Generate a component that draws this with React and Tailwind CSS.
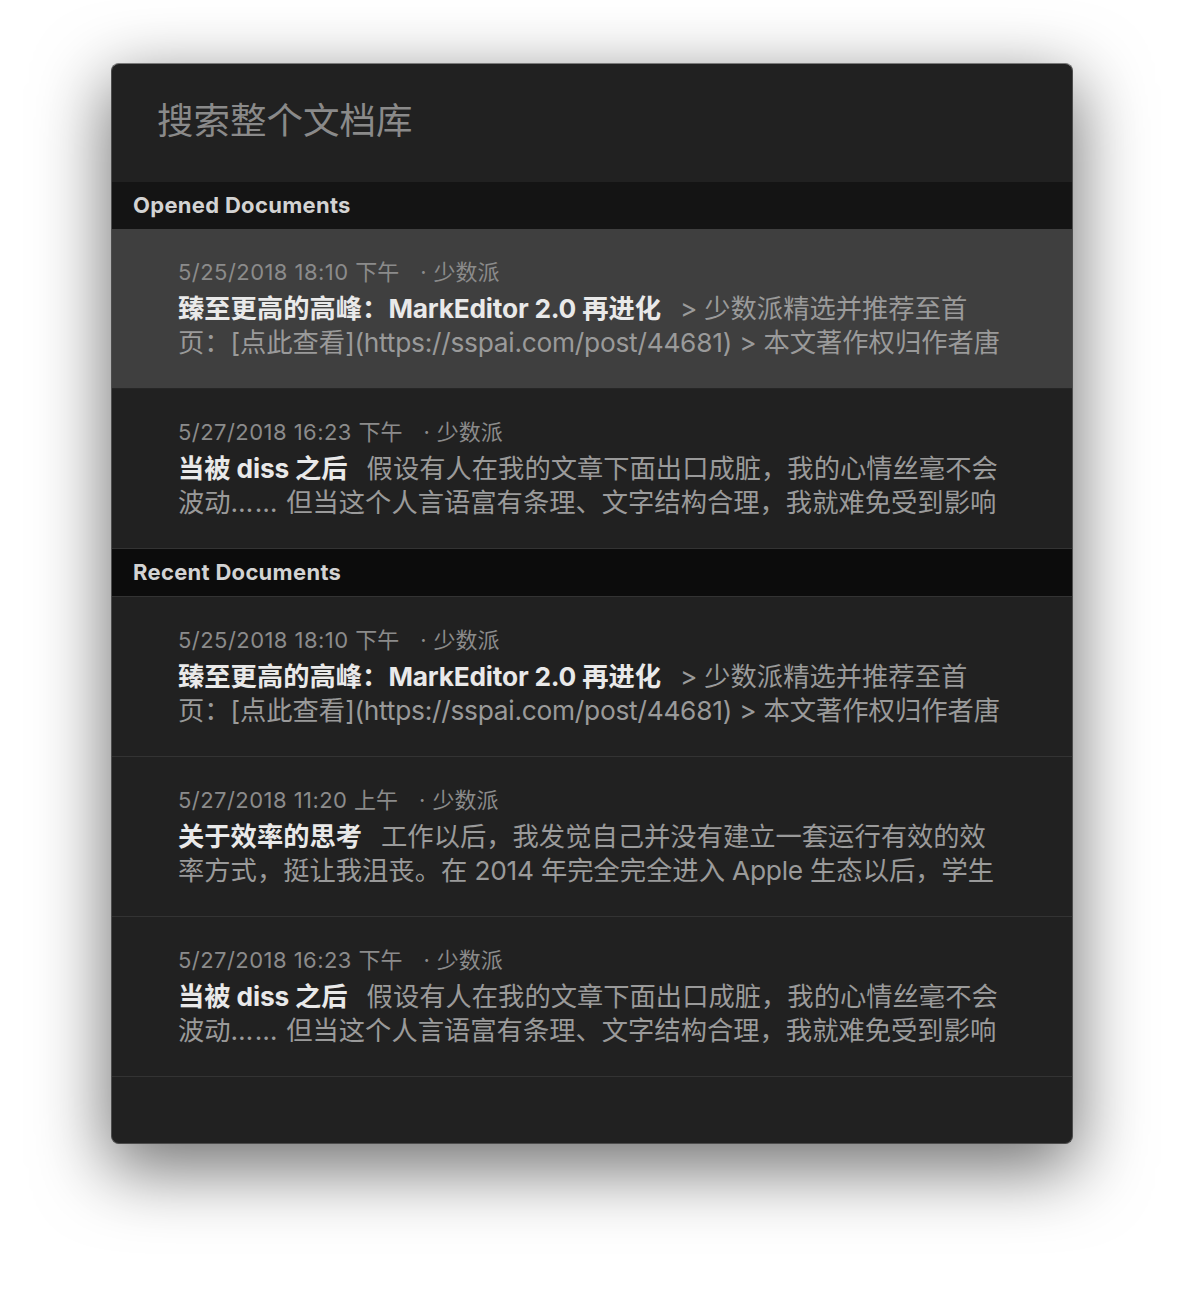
import React from "react";

const CJK = /([\u2E80-\u9FFF\uFF00-\uFFEF\u3000-\u303F]+)/;

function T({ text, latin }) {
  const parts = text.split(CJK);
  return (
    <>
      {parts.map((p, i) =>
        p === "" ? null : CJK.test(p) ? (
          <span key={i}>{p}</span>
        ) : (
          <span key={i} className={latin}>
            {p}
          </span>
        )
      )}
    </>
  );
}

const rows = {
  opened: [
    {
      date: "5/25/2018 18:10 下午",
      title: "臻至更高的高峰：MarkEditor 2.0 再进化",
      rest: "> 少数派精选并推荐至首",
      line2: ["页：[点此查看](https://sspai.com/post/44681) > 本文著作权归作者唐"],
      active: true,
    },
    {
      date: "5/27/2018 16:23 下午",
      title: "当被 diss 之后",
      rest: "假设有人在我的文章下面出口成脏，我的心情丝毫不会",
      line2: ["波动", "……", " 但当这个人言语富有条理、文字结构合理，我就难免受到影响"],
    },
  ],
  recent: [
    {
      date: "5/25/2018 18:10 下午",
      title: "臻至更高的高峰：MarkEditor 2.0 再进化",
      rest: "> 少数派精选并推荐至首",
      line2: ["页：[点此查看](https://sspai.com/post/44681) > 本文著作权归作者唐"],
    },
    {
      date: "5/27/2018 11:20 上午",
      title: "关于效率的思考",
      rest: "工作以后，我发觉自己并没有建立一套运行有效的效",
      line2: ["率方式，挺让我沮丧。在 2014 年完全完全进入 Apple 生态以后，学生"],
    },
    {
      date: "5/27/2018 16:23 下午",
      title: "当被 diss 之后",
      rest: "假设有人在我的文章下面出口成脏，我的心情丝毫不会",
      line2: ["波动", "……", " 但当这个人言语富有条理、文字结构合理，我就难免受到影响"],
    },
  ],
};

function Row({ r }) {
  return (
    <div
      className={
        "h-[160px] shrink-0 pl-[66px] pr-[30px] pt-[30px] border-b " +
        (r.active ? "bg-[#3f3f3f] border-[#262626]" : "bg-[#212121] border-[#333333]")
      }
    >
      <div className="h-[26px] leading-[26px] text-[22px] text-[#8b8b8b] whitespace-nowrap">
        <T text={r.date} latin="tracking-[0.45px]" />
        <span className="ml-[21px]">·</span>
        <span className="ml-[7px]">少数派</span>
      </div>
      <div className="mt-[7px] h-[34px] leading-[34px] text-[26.3px] whitespace-nowrap overflow-hidden">
        <span className="font-bold text-[#e9e9e9]">
          <T text={r.title} latin="tracking-[-0.2px]" />
        </span>
        <span className="ml-[19px] text-[#9a9a9a]">
          <T text={r.rest} latin="tracking-[-0.3px]" />
        </span>
      </div>
      <div className="h-[34px] leading-[34px] text-[26.3px] text-[#9a9a9a] whitespace-nowrap overflow-hidden">
        {r.line2.map((s, i) =>
          s === "……" ? (
            <span key={i} className="tracking-[1.5px]">
              {s}
            </span>
          ) : (
            <T key={i} text={s} latin="tracking-[-0.25px]" />
          )
        )}
      </div>
    </div>
  );
}

function Header({ label, dark }) {
  return (
    <div
      className={
        "shrink-0 pl-[21px] flex items-center text-[22px] tracking-[0.3px] font-bold text-[#d3d3d3] " +
        (dark ? "h-[48px] bg-[#0c0c0c] border-b border-[#333333]" : "h-[47px] bg-[#141414]")
      }
    >
      {label}
    </div>
  );
}

export default function App() {
  return (
    <div className="min-h-[1304px] bg-white pt-[63px] pl-[111px] font-['Inter','Noto_Sans_CJK_SC',sans-serif]">
      <div className="w-[962px] h-[1081px] rounded-[8px] bg-[#212121] overflow-hidden border border-[#4d4d4d] border-t-[#7a7a7a] shadow-[0_22px_70px_4px_rgba(0,0,0,0.55)] flex flex-col">
        <div className="h-[118px] shrink-0 pl-[45px] pb-[4px] flex items-center">
          <span className="text-[36.5px] text-[#8a8a8a] leading-none">搜索整个文档库</span>
        </div>
        <Header label="Opened Documents" />
        {rows.opened.map((r, i) => (
          <Row key={"o" + i} r={r} />
        ))}
        <Header label="Recent Documents" dark />
        {rows.recent.map((r, i) => (
          <Row key={"r" + i} r={r} />
        ))}
        <div className="flex-1" />
      </div>
    </div>
  );
}
